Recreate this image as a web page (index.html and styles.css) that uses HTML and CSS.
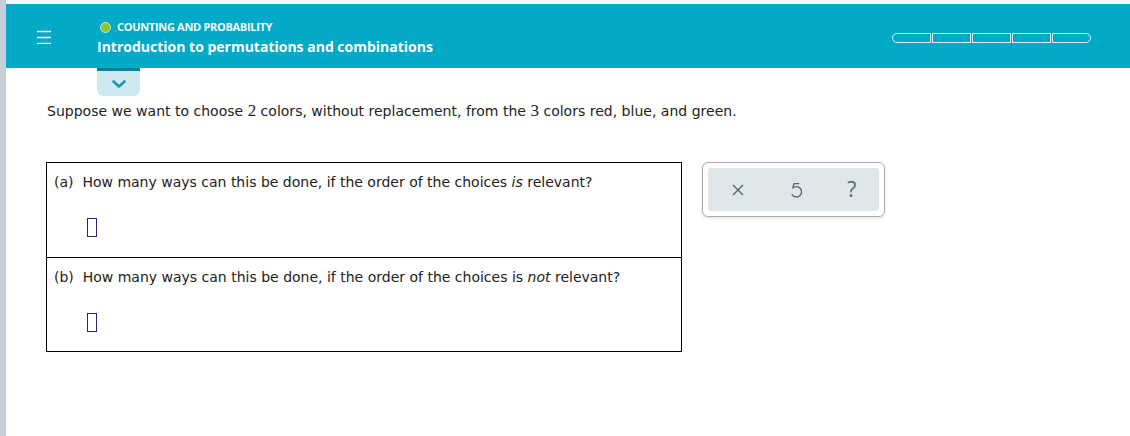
FILE: index.html
```html
<!DOCTYPE html>
<html>
<head>
<meta charset="utf-8">
<link rel="stylesheet" href="styles.css">
</head>
<body>
<div class="strip"></div>
<div class="main">
  <div class="topline"></div>
  <header class="header">
    <div class="menu">
      <svg width="16" height="14" viewBox="0 0 16 14"><path d="M1 1.5h14M1 7.5h14M1 13.5h14" stroke="#e9f7fa" stroke-width="1.6" fill="none"/></svg>
    </div>
    <div class="titles">
      <div class="topic"><span class="dot"></span>COUNTING AND PROBABILITY</div>
      <div class="title">Introduction to permutations and combinations</div>
    </div>
    <div class="progress">
      <span class="seg first"></span><span class="seg"></span><span class="seg"></span><span class="seg"></span><span class="seg last"></span>
    </div>
  </header>
  <div class="tabrow">
    <div class="tab">
      <svg width="16" height="10" viewBox="0 0 16 10"><path d="M2.5 2.5l5.5 5 5.5-5" stroke="#1595b1" stroke-width="2.6" fill="none" stroke-linecap="round" stroke-linejoin="round"/></svg>
    </div>
  </div>
  <div class="content">
    <p class="prompt">Suppose we want to choose <span class="num">2</span> colors, without replacement, from the <span class="num">3</span> colors red, blue, and green.</p>
    <div class="work">
      <div class="qtable">
        <div class="qrow">
          <div class="qtext">(a)&nbsp; How many ways can this be done, if the order of the choices <i>is</i> relevant?</div>
          <div class="answer"><span class="box"></span></div>
        </div>
        <div class="qrow">
          <div class="qtext">(b)&nbsp; How many ways can this be done, if the order of the choices is <i>not</i> relevant?</div>
          <div class="answer"><span class="box"></span></div>
        </div>
      </div>
      <div class="tools">
        <div class="toolbar">
          <svg width="14" height="14" viewBox="0 0 14 14"><path d="M2 2l10 10M12 2L2 12" stroke="#4f6872" stroke-width="1.4" fill="none"/></svg>
          <svg width="16" height="18" viewBox="0 0 14 16"><path d="M9.5 2.3H5.2L4.2 6.2A4.6 4.6 0 1 1 3.5 12.2" stroke="#4f6872" stroke-width="1.2" fill="none" stroke-linejoin="round" stroke-linecap="round"/></svg>
          <span class="help">?</span>
        </div>
      </div>
    </div>
  </div>
</div>
</body>
</html>
```

FILE: styles.css
```css
html, body {
  margin: 0;
  padding: 0;
  height: 100%;
  background: #ffffff;
}
body {
  display: flex;
  font-family: "DejaVu Sans", Verdana, sans-serif;
}
.strip {
  width: 6px;
  flex: none;
  background: #c6d1d7;
}
.main {
  flex: 1;
  display: flex;
  flex-direction: column;
}
.topline {
  height: 4px;
  background: #eef6f8;
}
.header {
  height: 64px;
  background: #03aac7;
  display: flex;
  align-items: center;
  color: #ffffff;
}
.menu {
  width: 16px;
  margin-left: 30px;
  display: flex;
  align-items: center;
  margin-top: 2px;
}
.titles {
  margin-left: 45px;
  display: flex;
  flex-direction: column;
  font-family: "Open Sans", Lato, sans-serif;
  font-weight: 700;
  margin-top: 4px;
}
.topic {
  display: flex;
  align-items: center;
  font-size: 11px;
  letter-spacing: -0.3px;
  color: #f3fbfc;
  margin-left: 3px;
  line-height: 14px;
}
.dot {
  width: 9px;
  height: 9px;
  border-radius: 50%;
  background: #8cc63e;
  border: 1px solid #c9e9a4;
  margin-right: 6px;
}
.title {
  font-size: 14px;
  margin-top: 4px;
  letter-spacing: 0px;
  line-height: 18px;
}
.progress {
  margin-left: auto;
  margin-right: 39px;
  display: flex;
  margin-top: 4px;
}
.seg {
  width: 37px;
  height: 8px;
  border: 1.5px solid #d8f5fa;
  margin-right: 1px;
}
.seg.first { border-radius: 6px 0 0 6px; }
.seg.last { border-radius: 0 6px 6px 0; margin-right: 0; }
.tabrow {
  display: flex;
  padding-left: 91px;
}
.tab {
  width: 43px;
  height: 25px;
  background: #cfe9f1;
  border-top: 3px solid #0f7f96;
  border-radius: 0 0 6px 6px;
  display: flex;
  align-items: center;
  justify-content: center;
}
.content {
  padding-left: 40px;
}
.prompt {
  margin: 6px 0 0 1px;
  font-size: 14px;
  color: #222;
  line-height: 18px;
  letter-spacing: 0.01px;
}
.num {
  font-family: "Liberation Serif", "Times New Roman", serif;
  font-size: 17px;
}
.work {
  display: flex;
  align-items: flex-start;
  margin-top: 42px;
}
.qtable {
  width: 634px;
  border: 1px solid #000;
}
.qrow {
  height: 94px;
  padding: 10px 0 0 7px;
  box-sizing: border-box;
}
.qrow + .qrow {
  border-top: 1px solid #000;
  height: 94px;
}
.qtext {
  font-size: 14px;
  color: #222;
  line-height: 18px;
}
.answer {
  margin-top: 27px;
  padding-left: 33px;
}
.box {
  display: block;
  width: 8px;
  height: 17px;
  border: 1px solid #262673;
}
.tools {
  margin-left: 20px;
  width: 171px;
  height: 43px;
  padding: 5px;
  border: 1px solid #a9b1b5;
  border-radius: 6px;
  box-shadow: 0 1px 3px rgba(0,0,0,0.15);
}
.toolbar {
  height: 100%;
  background: #e0e7ea;
  border-radius: 3px;
  display: flex;
  align-items: center;
  justify-content: space-around;
  padding: 0 16px 0 16px;
  gap: 30px;
}
.help {
  font-family: "Open Sans", sans-serif;
  font-size: 21px;
  color: #4f6872;
  line-height: 1;
}
```
